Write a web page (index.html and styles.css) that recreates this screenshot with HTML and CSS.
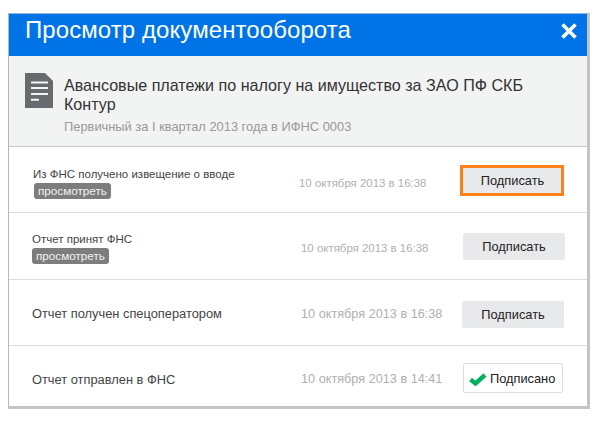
FILE: index.html
```html
<!DOCTYPE html>
<html lang="ru">
<head>
<meta charset="utf-8">
<title>Просмотр документооборота</title>
<link rel="stylesheet" href="styles.css">
</head>
<body>
<main class="dialog">
  <header class="head">
    <h1 class="head-title">Просмотр документооборота</h1>
    <svg class="close" width="18" height="16" viewBox="0 0 18 16"><path d="M2.500 1.500 15.500 14.500M15.500 1.500 2.500 14.500" fill="none" stroke="#fff" stroke-width="3.600"/></svg>
  </header>
  <section class="doc">
    <svg class="doc-icon" width="28" height="35" viewBox="0 0 28 35"><path d="M0 0H20L28 8V35H0Z" fill="#696a6e"/><path d="M6 9.500H23M6 15H23M6 21H23M6 26.700H14" stroke="#f2f3f3" stroke-width="2" fill="none"/></svg>
    <div class="doc-text">
      <div class="doc-title">Авансовые платежи по налогу на имущество за ЗАО ПФ СКБ Контур</div>
      <div class="doc-sub">Первичный за I квартал 2013 года в ИФНС 0003</div>
    </div>
  </section>
  <section class="row row-1">
    <div class="info info-small">
      <div>Из ФНС получено извещение о вводе</div>
      <span class="tag">просмотреть</span>
    </div>
    <div class="date date-small">10 октября 2013 в 16:38</div>
    <button class="btn btn-focus">Подписать</button>
  </section>
  <section class="row row-2">
    <div class="info info-small">
      <div>Отчет принят ФНС</div>
      <span class="tag">просмотреть</span>
    </div>
    <div class="date date-small">10 октября 2013 в 16:38</div>
    <button class="btn">Подписать</button>
  </section>
  <section class="row row-3">
    <div class="info">Отчет получен спецоператором</div>
    <div class="date">10 октября 2013 в 16:38</div>
    <button class="btn">Подписать</button>
  </section>
  <section class="row row-4">
    <div class="info">Отчет отправлен в ФНС</div>
    <div class="date">10 октября 2013 в 14:41</div>
    <button class="btn btn-done">
      <svg class="check" width="18" height="13" viewBox="0 0 18 13"><path d="M1.500 6.500 6.500 10.500 16 2" fill="none" stroke="#00b35c" stroke-width="4.400"/></svg>
      Подписано
    </button>
  </section>
</main>
</body>
</html>
```
FILE: styles.css
```css
* { box-sizing: border-box; }
html, body { margin: 0; background: #fff; }
body {
  padding: 13px 0 0 8px;
  width: 600px;
  height: 423px;
  overflow: hidden;
  font-family: "Liberation Sans", Arial, sans-serif;
  color: #333;
}
.dialog {
  width: 582px;
  height: 396px;
  border-left: 1px solid #b5b7b9;
  border-right: 3px solid #c4c4c4;
  border-bottom: 3px solid #c4c4c4;
  border-top: 1px solid #8fb6e0;
  display: flex;
  flex-direction: column;
}
.head {
  height: 42px;
  flex: none;
  background: #0073e6;
  color: #fff;
  display: flex;
  align-items: center;
  justify-content: space-between;
  padding: 0 9px 0 16px;
}
.head-title {
  margin: 0 0 11px;
  font-size: 24px;
  font-weight: 400;
  letter-spacing: 0.08px;
}
.close { margin-bottom: 9px; }
.doc {
  height: 91px;
  flex: none;
  background: #f2f3f3;
  border-bottom: 1px solid #c8c8c8;
  display: flex;
  padding: 20px 40px 0 16px;
  gap: 11px;
}
.doc-icon { flex: none; margin-top: -3px; }
.doc-title { font-size: 16.1px; line-height: 19px; color: #333; width: 470px; }
.doc-sub { font-size: 12.87px; line-height: 20px; color: #999; margin-top: 3px; }
.row {
  display: flex;
  align-items: center;
  flex: none;
  border-bottom: 1px solid #ddd;
  padding-left: 23px;
}
.row-1 { height: 66px; padding-top: 1px; }
.row-2 { height: 67px; }
.row-3 { height: 66px; padding-top: 2px; }
.row-4 { flex: 1; border-bottom: 0; padding-top: 4px; }
.info { width: 269px; font-size: 12.85px; color: #444; }
.info-small { font-size: 11.5px; line-height: 16px; }
.row-1 .info { padding-left: 1px; margin-top: 5px; }
.row-2 .info { margin-top: 3px; }
.row-4 .info { margin-top: 2px; }
.tag {
  display: inline-block;
  background: #7d7d7d;
  color: #f2f2f2;
  font-size: 11.7px;
  line-height: 16px;
  padding: 0 4px;
  border-radius: 3px;
  margin-top: 1px;
}
.row-1 .tag { margin-left: 1px; }
.date { width: 161px; font-size: 12.7px; color: #b0b0b0; }
.date-small { font-size: 11.45px; }
.row-1 .date { width: 162px; margin-left: -2px; margin-top: 6px; }
.row-2 .date { width: 162px; margin-top: 4px; }
.row-4 .date { width: 162px; margin-top: 2px; }
.btn {
  width: 102px;
  height: 27px;
  border: 0;
  border-radius: 2px;
  background: #e8e9ea;
  color: #222;
  font: 12.8px "Liberation Sans", Arial, sans-serif;
  padding: 0;
}
.row-3 .btn { margin-top: 2px; }
.btn-focus {
  width: 98px;
  height: 25px;
  margin-left: 2px;
  padding-left: 1px;
  outline: 3px solid #fb8118;
  border-radius: 0;
}
.btn-done {
  width: 100px;
  height: 30px;
  background: #fff;
  border: 1px solid #ddd;
  display: flex;
  align-items: center;
  gap: 3px;
  padding: 0 0 0 5px;
}
.check { margin-top: 2px; }
```
